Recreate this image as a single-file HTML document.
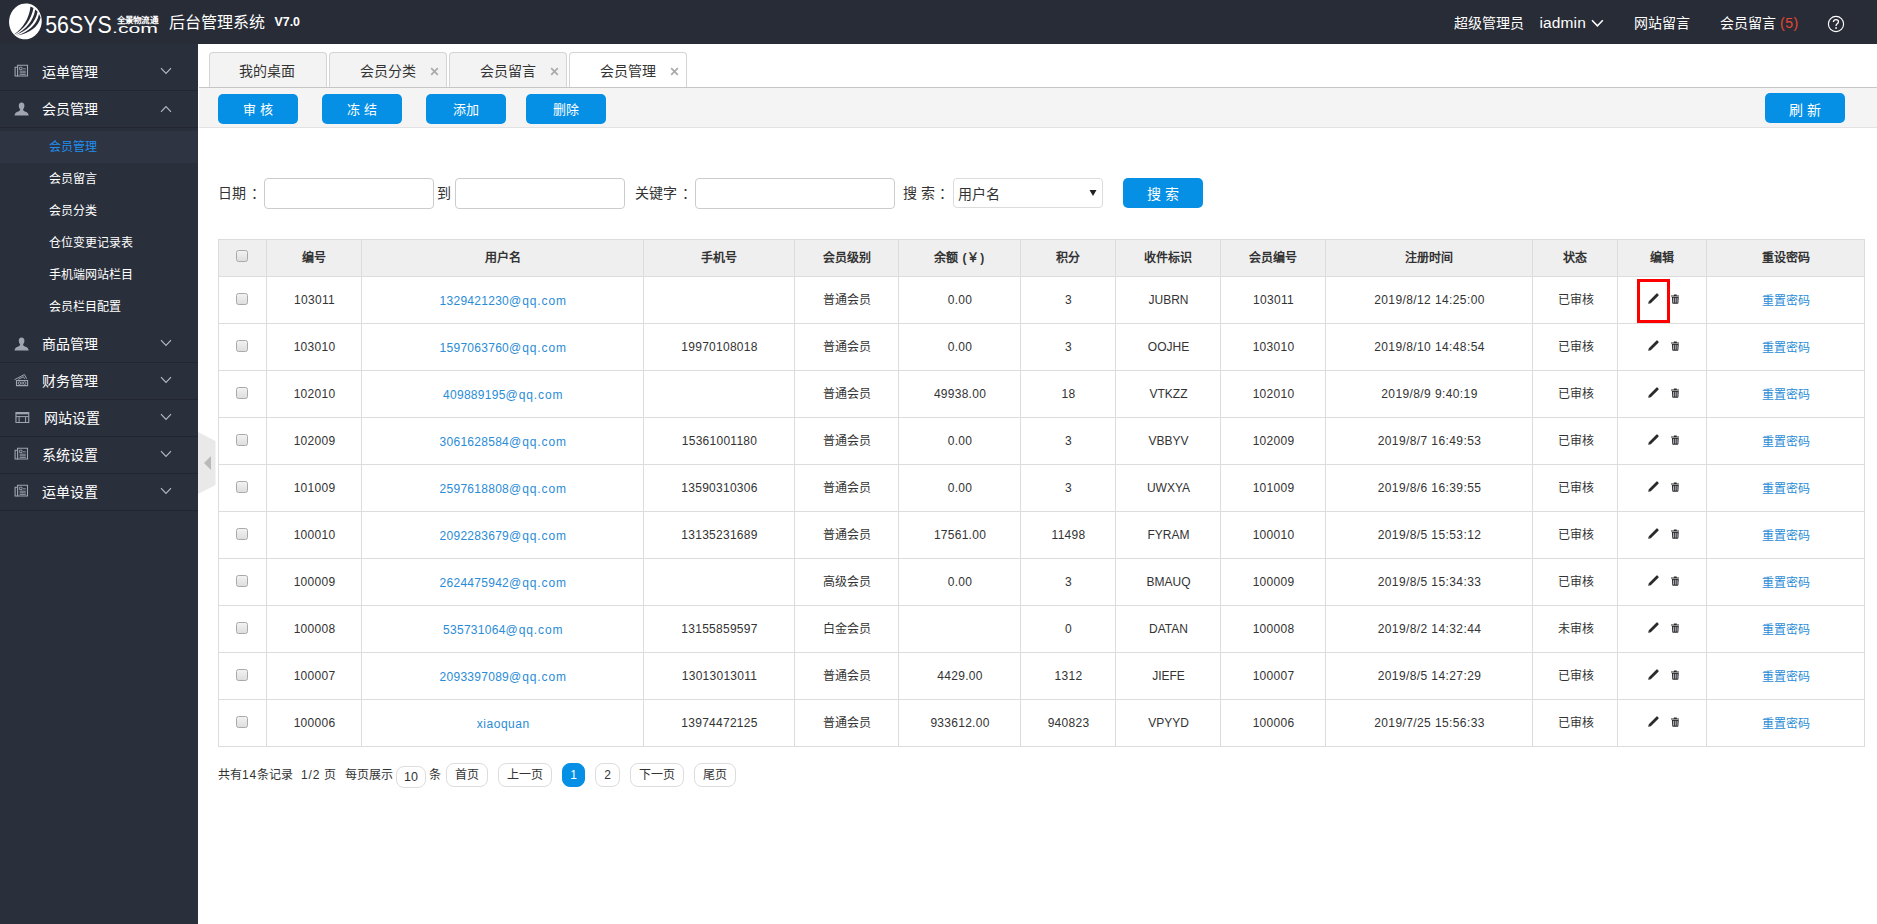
<!DOCTYPE html>
<html lang="zh-CN">
<head>
<meta charset="utf-8">
<title>后台管理系统</title>
<style>
*{box-sizing:border-box;margin:0;padding:0}
html,body{width:1877px;height:924px;overflow:hidden;background:#fff}
body{font-family:"Liberation Sans",sans-serif;font-size:12px;color:#333;position:relative}
.abs{position:absolute}
#hdr{position:absolute;left:0;top:0;width:1877px;height:44px;background:#282c36}
#side{position:absolute;left:0;top:44px;width:198px;height:880px;background:#2a2f3c}
.ht{position:absolute;color:#fff;white-space:nowrap;line-height:20px}
.mi{position:absolute;left:0;width:198px;height:37px;border-bottom:1px solid #232630}
.mi .t{position:absolute;left:42px;top:8px;font-size:14px;line-height:20px;color:#fff;white-space:nowrap}
.mi svg.i{position:absolute}
.mi svg.ch{position:absolute;left:160px;top:13px;width:12px;height:8px}
.sub{position:absolute;left:0;width:198px;height:32px}
.sub span{position:absolute;left:49px;top:6px;line-height:20px;font-size:12px;color:#fff;white-space:nowrap}
.sub.on{background:#2f3442}
.sub.on span{color:#1f8ff0}
.tab{position:absolute;top:52px;width:118px;height:36px;border:1px solid #d4d4d4;border-bottom:none;border-radius:4px 4px 0 0;background:#f3f3f3}
.tab span{position:absolute;top:8px;font-size:14px;line-height:20px;color:#333;white-space:nowrap}
.tab i{position:absolute;left:100px;top:12px;width:9px;height:9px}
.tab.on{background:#fff}
#tool{position:absolute;left:199px;top:87px;width:1678px;height:41px;background:#f4f4f4;border-top:1px solid #c6c6c6;border-bottom:1px solid #e2e2e2}
.btn{position:absolute;width:80px;height:30px;border-radius:5px;background:#0590e6;color:#fff;font-size:13px;line-height:32px;text-align:center;white-space:pre}
.lbl{position:absolute;font-size:14px;line-height:20px;color:#333;white-space:pre}
.co{margin-left:4.5px}
.inp{position:absolute;top:178px;height:31px;border:1px solid #ccc;border-radius:4px;background:#fff}
.tbl{position:absolute;left:218px;top:239px;width:1647px;height:508px}
.thbg{position:absolute;left:0;top:0;width:1647px;height:38px;background:#efefef}
.hl{position:absolute;left:0;width:1647px;height:1px;background:#dcdcdc}
.vl{position:absolute;top:0;width:1px;height:508px;background:#dcdcdc}
.th{position:absolute;top:1px;height:36px;line-height:36px;text-align:center;font-weight:bold;font-size:12px;color:#333;white-space:nowrap}
.td{position:absolute;height:46px;line-height:46px;padding-left:1px;text-align:center;font-size:12px;color:#333;white-space:nowrap}
.td.lk{color:#2a8cd6;padding-top:1px;padding-left:1.5px}
.n{letter-spacing:0.27px}
.lt{letter-spacing:0.9px}
.dt{letter-spacing:0.4px}
.cb{position:absolute;width:12px;height:12px;border:1px solid #a9a9a9;border-radius:2.5px;background:linear-gradient(#f2f2f2,#dedede)}
.ic{position:absolute}
.ic svg{display:block}
svg.pen{width:11px;height:11px}
svg.tr{width:8.6px;height:10px}
.redbox{position:absolute;left:1419px;top:40px;width:33px;height:44px;border:3px solid #f00}
.pg{position:absolute;font-size:12px;line-height:20px;color:#333;white-space:nowrap}
.pb{position:absolute;top:762.5px;height:24px;border:1px solid #ddd;border-radius:8px;font-size:12px;line-height:22px;text-align:center;color:#333;background:#fff;white-space:nowrap}
.pb.on{background:#0590e6;border-color:#0590e6;color:#fff}
</style>
</head>
<body>
<div id="hdr">
  <svg class="abs" style="left:8px;top:2px" width="36" height="40" viewBox="0 0 36 40">
    <ellipse cx="17.4" cy="19.4" rx="16.3" ry="18" fill="#fff" transform="rotate(8 17.4 19.4)"/>
    <path d="M22.5 4.5 Q20.5 22 5.5 33 Q22 24 25.5 6 Z" fill="#282c36"/>
    <path d="M27.2 7.5 Q24.5 24 7 33.2 Q26 26.5 29.6 9.8 Z" fill="#282c36"/>
    <path d="M31 12 Q28 27 9 33.6 Q29 29.5 32.6 15.5 Z" fill="#282c36"/>
  </svg>
  <svg class="abs" style="left:44px;top:10px" width="118" height="28" viewBox="0 0 118 28">
    <text x="1.2" y="22.6" font-family="Liberation Sans, sans-serif" font-size="24" fill="#fff" textLength="66.5" lengthAdjust="spacingAndGlyphs">56SYS</text>
    <text x="68" y="22.6" font-family="Liberation Sans, sans-serif" font-size="13.5" fill="#fff" textLength="46" lengthAdjust="spacingAndGlyphs">.com</text>
    <text x="72.6" y="13.2" font-family="Liberation Sans, sans-serif" font-size="8.3" font-weight="bold" fill="#fff" textLength="41.5" lengthAdjust="spacingAndGlyphs">全景物流通</text>
  </svg>
  <div class="ht" style="left:169px;top:13px;font-size:16px">后台管理系统</div>
  <div class="ht" style="left:274.5px;top:12px;font-size:12.4px;font-weight:bold">V7.0</div>
  <div class="ht" style="left:1454px;top:13px;font-size:14px">超级管理员</div>
  <div class="ht" style="left:1539.4px;top:13px;font-size:15.5px;letter-spacing:0.15px">iadmin</div>
  <svg class="abs" style="left:1591px;top:19px" width="13" height="9" viewBox="0 0 13 9"><path d="M1 1.2 L6.4 6.8 L11.8 1.2" fill="none" stroke="#fff" stroke-width="1.5"/></svg>
  <div class="ht" style="left:1634px;top:13px;font-size:14px">网站留言</div>
  <div class="ht" style="left:1720px;top:13px;font-size:14px">会员留言 <span style="color:#e74535;font-size:14px;letter-spacing:0.6px">(5)</span></div>
  <svg class="abs" style="left:1827px;top:15px" width="18" height="18" viewBox="0 0 18 18"><circle cx="9" cy="9" r="7.6" fill="none" stroke="#fff" stroke-width="1.15"/><path d="M6.4 7 Q6.5 4.6 9 4.6 Q11.5 4.6 11.5 6.8 Q11.5 8 10 8.9 Q9 9.6 9 10.9" fill="none" stroke="#fff" stroke-width="1.25"/><rect x="8.25" y="12.2" width="1.6" height="1.6" fill="#fff"/></svg>
</div>

<div id="side">
<div class="mi" style="top:10px"><svg class="i" style="left:14px;top:10.4px" width="15" height="13" viewBox="0 0 15 13"><path d="M3.6 1.2 H13.5 V12 H3.6 Z" fill="none" stroke="#a0a5b0" stroke-width="1.1"/><path d="M3.4 3.2 H1.1 V12 H4" fill="none" stroke="#a0a5b0" stroke-width="1.1"/><path d="M5.6 3.2 H8 V5.6 H5.6 Z M9 4.8 H11.8 M5.6 7.2 H11.8 M5.6 8.8 H11.8 M5.6 10.4 H11.8" fill="none" stroke="#a0a5b0" stroke-width="0.9"/></svg><span class="t" style="left:42px">运单管理</span><svg class="ch" viewBox="0 0 12 8"><path d="M1 1.2 L6 6.4 L11 1.2" fill="none" stroke="#b4b8c0" stroke-width="1.2"/></svg></div>
<div class="mi" style="top:47px"><svg class="i" style="left:13.5px;top:10.6px" width="15" height="14" viewBox="0 0 15 14"><path d="M7.6 0.6 C9.5 0.6 10.4 1.9 10.4 3.7 C10.4 5.2 9.9 6.4 9.1 7.2 C9.1 8.3 9.5 8.8 10.9 9.4 C12.9 10.2 14.4 10.9 14.7 13.4 H0.5 C0.8 10.9 2.3 10.2 4.3 9.4 C5.7 8.8 6.1 8.3 6.1 7.2 C5.3 6.4 4.8 5.2 4.8 3.7 C4.8 1.9 5.7 0.6 7.6 0.6 Z" fill="#a0a5b0"/></svg><span class="t" style="left:42px">会员管理</span><svg class="ch" style="top:14px" viewBox="0 0 12 8"><path d="M1 6.8 L6 1.6 L11 6.8" fill="none" stroke="#b4b8c0" stroke-width="1.2"/></svg></div>
<div class="sub on" style="top:87px"><span>会员管理</span></div>
<div class="sub" style="top:119px"><span>会员留言</span></div>
<div class="sub" style="top:151px"><span>会员分类</span></div>
<div class="sub" style="top:183px"><span>仓位变更记录表</span></div>
<div class="sub" style="top:215px"><span>手机端网站栏目</span></div>
<div class="sub" style="top:247px"><span>会员栏目配置</span></div>
<div class="mi" style="top:282px"><svg class="i" style="left:13.5px;top:10.6px" width="15" height="14" viewBox="0 0 15 14"><path d="M7.6 0.6 C9.5 0.6 10.4 1.9 10.4 3.7 C10.4 5.2 9.9 6.4 9.1 7.2 C9.1 8.3 9.5 8.8 10.9 9.4 C12.9 10.2 14.4 10.9 14.7 13.4 H0.5 C0.8 10.9 2.3 10.2 4.3 9.4 C5.7 8.8 6.1 8.3 6.1 7.2 C5.3 6.4 4.8 5.2 4.8 3.7 C4.8 1.9 5.7 0.6 7.6 0.6 Z" fill="#a0a5b0"/></svg><span class="t" style="left:42px">商品管理</span><svg class="ch" viewBox="0 0 12 8"><path d="M1 1.2 L6 6.4 L11 1.2" fill="none" stroke="#b4b8c0" stroke-width="1.2"/></svg></div>
<div class="mi" style="top:319px"><svg class="i" style="left:14px;top:10.9px" width="15" height="13" viewBox="0 0 15 13"><path d="M2.5 6.5 H13.6 V11.6 H2.5 Z" fill="none" stroke="#a0a5b0" stroke-width="1.1"/><circle cx="5.5" cy="9.05" r="1.35" fill="none" stroke="#a0a5b0" stroke-width="0.9"/><circle cx="10.6" cy="9.05" r="1.35" fill="none" stroke="#a0a5b0" stroke-width="0.9"/><path d="M8.05 7.4 V10.7" stroke="#a0a5b0" stroke-width="0.9"/><path d="M0.5 5.7 L10.4 0.5 L12.6 4.7 M4.4 5.3 L9.4 2.7 L10.6 4.8" fill="none" stroke="#a0a5b0" stroke-width="1"/></svg><span class="t" style="left:42px">财务管理</span><svg class="ch" viewBox="0 0 12 8"><path d="M1 1.2 L6 6.4 L11 1.2" fill="none" stroke="#b4b8c0" stroke-width="1.2"/></svg></div>
<div class="mi" style="top:356px"><svg class="i" style="left:14.5px;top:11.9px" width="15" height="12" viewBox="0 0 15 12"><path d="M0.95 0.5 H13.75 V10.45 H0.95 Z" fill="none" stroke="#a0a5b0" stroke-width="1.1"/><path d="M0.95 1.3 H13.75" stroke="#a0a5b0" stroke-width="2"/><path d="M0.95 4.6 H13.75 M4.1 4.6 V10.4 M10.6 4.6 V10.4" stroke="#a0a5b0" stroke-width="1" fill="none"/></svg><span class="t" style="left:44px">网站设置</span><svg class="ch" viewBox="0 0 12 8"><path d="M1 1.2 L6 6.4 L11 1.2" fill="none" stroke="#b4b8c0" stroke-width="1.2"/></svg></div>
<div class="mi" style="top:393px"><svg class="i" style="left:14px;top:10.4px" width="15" height="13" viewBox="0 0 15 13"><path d="M3.6 1.2 H13.5 V12 H3.6 Z" fill="none" stroke="#a0a5b0" stroke-width="1.1"/><path d="M3.4 3.2 H1.1 V12 H4" fill="none" stroke="#a0a5b0" stroke-width="1.1"/><path d="M5.6 3.2 H8 V5.6 H5.6 Z M9 4.8 H11.8 M5.6 7.2 H11.8 M5.6 8.8 H11.8 M5.6 10.4 H11.8" fill="none" stroke="#a0a5b0" stroke-width="0.9"/></svg><span class="t" style="left:42px">系统设置</span><svg class="ch" viewBox="0 0 12 8"><path d="M1 1.2 L6 6.4 L11 1.2" fill="none" stroke="#b4b8c0" stroke-width="1.2"/></svg></div>
<div class="mi" style="top:430px"><svg class="i" style="left:14px;top:10.4px" width="15" height="13" viewBox="0 0 15 13"><path d="M3.6 1.2 H13.5 V12 H3.6 Z" fill="none" stroke="#a0a5b0" stroke-width="1.1"/><path d="M3.4 3.2 H1.1 V12 H4" fill="none" stroke="#a0a5b0" stroke-width="1.1"/><path d="M5.6 3.2 H8 V5.6 H5.6 Z M9 4.8 H11.8 M5.6 7.2 H11.8 M5.6 8.8 H11.8 M5.6 10.4 H11.8" fill="none" stroke="#a0a5b0" stroke-width="0.9"/></svg><span class="t" style="left:42px">运单设置</span><svg class="ch" viewBox="0 0 12 8"><path d="M1 1.2 L6 6.4 L11 1.2" fill="none" stroke="#b4b8c0" stroke-width="1.2"/></svg></div>
</div>

<!-- collapse handle -->
<svg class="abs" style="left:198px;top:432px" width="18" height="62" viewBox="0 0 18 62"><path d="M0 0 L17.5 9 L17.5 53 L0 62 Z" fill="#e9e9e9"/><path d="M13 24 L6 31 L13 38 Z" fill="#b9b9b9"/></svg>

<!-- tabs -->
<div class="tab" style="left:209px"><span style="left:29px">我的桌面</span></div>
<div class="tab" style="left:329px"><span style="left:30px">会员分类</span><i><svg width="9" height="9" viewBox="0 0 9 9"><path d="M1.2 1.2 L7.8 7.8 M7.8 1.2 L1.2 7.8" stroke="#aaa" stroke-width="1.7"/></svg></i></div>
<div class="tab" style="left:449px"><span style="left:30px">会员留言</span><i><svg width="9" height="9" viewBox="0 0 9 9"><path d="M1.2 1.2 L7.8 7.8 M7.8 1.2 L1.2 7.8" stroke="#aaa" stroke-width="1.7"/></svg></i></div>
<div class="tab on" style="left:569px"><span style="left:30px">会员管理</span><i><svg width="9" height="9" viewBox="0 0 9 9"><path d="M1.2 1.2 L7.8 7.8 M7.8 1.2 L1.2 7.8" stroke="#aaa" stroke-width="1.7"/></svg></i></div>

<div id="tool"></div>
<div class="btn" style="left:218px;top:94px">审 核</div>
<div class="btn" style="left:322px;top:94px">冻 结</div>
<div class="btn" style="left:426px;top:94px">添加</div>
<div class="btn" style="left:526px;top:94px">删除</div>
<div class="btn" style="left:1765px;top:93px;font-size:14px;line-height:34px">刷 新</div>

<!-- search -->
<div class="lbl" style="left:218px;top:183px">日期<span class="co">：</span></div>
<div class="inp" style="left:264px;width:170px"></div>
<div class="lbl" style="left:437px;top:183px">到</div>
<div class="inp" style="left:455px;width:170px"></div>
<div class="lbl" style="left:635px;top:183px">关键字<span class="co">：</span></div>
<div class="inp" style="left:695px;width:200px"></div>
<div class="lbl" style="left:903px;top:183px">搜 索<span class="co">：</span></div>
<div class="inp" style="left:953px;width:150px;height:30px;border-color:#dcdcdc"><span class="lbl" style="left:4px;top:5px">用户名</span><svg class="abs" style="left:135px;top:10px" width="8" height="8" viewBox="0 0 8 8"><path d="M0.5 1 H7.5 L4 7 Z" fill="#222"/></svg></div>
<div class="btn" style="left:1123px;top:178px;font-size:14px;line-height:32px">搜 索</div>

<div class="tbl">
<div class="thbg"></div>
<div class="hl" style="top:0px"></div>
<div class="hl" style="top:37px"></div>
<div class="hl" style="top:84px"></div>
<div class="hl" style="top:131px"></div>
<div class="hl" style="top:178px"></div>
<div class="hl" style="top:225px"></div>
<div class="hl" style="top:272px"></div>
<div class="hl" style="top:319px"></div>
<div class="hl" style="top:366px"></div>
<div class="hl" style="top:413px"></div>
<div class="hl" style="top:460px"></div>
<div class="hl" style="top:507px"></div>
<div class="vl" style="left:0px"></div>
<div class="vl" style="left:48px"></div>
<div class="vl" style="left:143px"></div>
<div class="vl" style="left:425px"></div>
<div class="vl" style="left:576px"></div>
<div class="vl" style="left:680px"></div>
<div class="vl" style="left:802px"></div>
<div class="vl" style="left:897px"></div>
<div class="vl" style="left:1002px"></div>
<div class="vl" style="left:1107px"></div>
<div class="vl" style="left:1314px"></div>
<div class="vl" style="left:1399px"></div>
<div class="vl" style="left:1488px"></div>
<div class="vl" style="left:1646px"></div>
<div class="cb" style="left:18px;top:11px"></div>
<div class="th" style="left:49px;width:94px">编号</div>
<div class="th" style="left:144px;width:281px">用户名</div>
<div class="th" style="left:426px;width:150px">手机号</div>
<div class="th" style="left:577px;width:103px">会员级别</div>
<div class="th" style="left:681px;width:121px">余额<span style="margin-left:4.5px;letter-spacing:0.9px">(￥)</span></div>
<div class="th" style="left:803px;width:94px">积分</div>
<div class="th" style="left:898px;width:104px">收件标识</div>
<div class="th" style="left:1003px;width:104px">会员编号</div>
<div class="th" style="left:1108px;width:206px">注册时间</div>
<div class="th" style="left:1315px;width:84px">状态</div>
<div class="th" style="left:1400px;width:88px">编辑</div>
<div class="th" style="left:1489px;width:157px">重设密码</div>
<div class="cb" style="left:18px;top:54px"></div>
<div class="td" style="left:49px;width:94px;top:38px"><span class="n">103011</span></div>
<div class="td lk" style="left:144px;width:281px;top:38px"><span class="n">1329421230</span><span class="lt">@qq.com</span></div>
<div class="td" style="left:426px;width:150px;top:38px"><span class="n"></span></div>
<div class="td" style="left:577px;width:103px;top:38px">普通会员</div>
<div class="td" style="left:681px;width:121px;top:38px"><span class="n">0.00</span></div>
<div class="td" style="left:803px;width:94px;top:38px"><span class="n">3</span></div>
<div class="td" style="left:898px;width:104px;top:38px">JUBRN</div>
<div class="td" style="left:1003px;width:104px;top:38px"><span class="n">103011</span></div>
<div class="td" style="left:1108px;width:206px;top:38px"><span class="dt">2019/8/12 14:25:00</span></div>
<div class="td" style="left:1315px;width:84px;top:38px">已审核</div>
<div class="ic" style="left:1430px;top:54px"><svg class="pen" viewBox="0 0 11 11"><path d="M0.3 10.7 L0.8 8.2 L8.3 0.7 Q9 0 9.7 0.7 L10.4 1.4 Q11 2.1 10.4 2.8 L2.8 10.2 Z" fill="#2b2b2b"/><path d="M0.3 10.7 L0.7 9 L2 10.3 Z" fill="#777"/></svg></div>
<div class="ic" style="left:1452.5px;top:55px"><svg class="tr" viewBox="0 0 9 10"><path d="M0 1.3 H9 V2.5 H0 Z M3 0.2 H6 V1.3 H3 Z" fill="#2b2b2b"/><path d="M0.9 3 H8.1 L7.7 9.2 Q7.6 10 6.9 10 H2.1 Q1.4 10 1.3 9.2 Z" fill="#2b2b2b"/><path d="M2.6 3.8 V8.8 M4.5 3.8 V8.8 M6.4 3.8 V8.8" stroke="#c8c8d8" stroke-width="0.9"/></svg></div>
<div class="td lk" style="left:1489px;width:157px;top:38px">重置密码</div>
<div class="cb" style="left:18px;top:101px"></div>
<div class="td" style="left:49px;width:94px;top:85px"><span class="n">103010</span></div>
<div class="td lk" style="left:144px;width:281px;top:85px"><span class="n">1597063760</span><span class="lt">@qq.com</span></div>
<div class="td" style="left:426px;width:150px;top:85px"><span class="n">19970108018</span></div>
<div class="td" style="left:577px;width:103px;top:85px">普通会员</div>
<div class="td" style="left:681px;width:121px;top:85px"><span class="n">0.00</span></div>
<div class="td" style="left:803px;width:94px;top:85px"><span class="n">3</span></div>
<div class="td" style="left:898px;width:104px;top:85px">OOJHE</div>
<div class="td" style="left:1003px;width:104px;top:85px"><span class="n">103010</span></div>
<div class="td" style="left:1108px;width:206px;top:85px"><span class="dt">2019/8/10 14:48:54</span></div>
<div class="td" style="left:1315px;width:84px;top:85px">已审核</div>
<div class="ic" style="left:1430px;top:101px"><svg class="pen" viewBox="0 0 11 11"><path d="M0.3 10.7 L0.8 8.2 L8.3 0.7 Q9 0 9.7 0.7 L10.4 1.4 Q11 2.1 10.4 2.8 L2.8 10.2 Z" fill="#2b2b2b"/><path d="M0.3 10.7 L0.7 9 L2 10.3 Z" fill="#777"/></svg></div>
<div class="ic" style="left:1452.5px;top:102px"><svg class="tr" viewBox="0 0 9 10"><path d="M0 1.3 H9 V2.5 H0 Z M3 0.2 H6 V1.3 H3 Z" fill="#2b2b2b"/><path d="M0.9 3 H8.1 L7.7 9.2 Q7.6 10 6.9 10 H2.1 Q1.4 10 1.3 9.2 Z" fill="#2b2b2b"/><path d="M2.6 3.8 V8.8 M4.5 3.8 V8.8 M6.4 3.8 V8.8" stroke="#c8c8d8" stroke-width="0.9"/></svg></div>
<div class="td lk" style="left:1489px;width:157px;top:85px">重置密码</div>
<div class="cb" style="left:18px;top:148px"></div>
<div class="td" style="left:49px;width:94px;top:132px"><span class="n">102010</span></div>
<div class="td lk" style="left:144px;width:281px;top:132px"><span class="n">409889195</span><span class="lt">@qq.com</span></div>
<div class="td" style="left:426px;width:150px;top:132px"><span class="n"></span></div>
<div class="td" style="left:577px;width:103px;top:132px">普通会员</div>
<div class="td" style="left:681px;width:121px;top:132px"><span class="n">49938.00</span></div>
<div class="td" style="left:803px;width:94px;top:132px"><span class="n">18</span></div>
<div class="td" style="left:898px;width:104px;top:132px">VTKZZ</div>
<div class="td" style="left:1003px;width:104px;top:132px"><span class="n">102010</span></div>
<div class="td" style="left:1108px;width:206px;top:132px"><span class="dt">2019/8/9 9:40:19</span></div>
<div class="td" style="left:1315px;width:84px;top:132px">已审核</div>
<div class="ic" style="left:1430px;top:148px"><svg class="pen" viewBox="0 0 11 11"><path d="M0.3 10.7 L0.8 8.2 L8.3 0.7 Q9 0 9.7 0.7 L10.4 1.4 Q11 2.1 10.4 2.8 L2.8 10.2 Z" fill="#2b2b2b"/><path d="M0.3 10.7 L0.7 9 L2 10.3 Z" fill="#777"/></svg></div>
<div class="ic" style="left:1452.5px;top:149px"><svg class="tr" viewBox="0 0 9 10"><path d="M0 1.3 H9 V2.5 H0 Z M3 0.2 H6 V1.3 H3 Z" fill="#2b2b2b"/><path d="M0.9 3 H8.1 L7.7 9.2 Q7.6 10 6.9 10 H2.1 Q1.4 10 1.3 9.2 Z" fill="#2b2b2b"/><path d="M2.6 3.8 V8.8 M4.5 3.8 V8.8 M6.4 3.8 V8.8" stroke="#c8c8d8" stroke-width="0.9"/></svg></div>
<div class="td lk" style="left:1489px;width:157px;top:132px">重置密码</div>
<div class="cb" style="left:18px;top:195px"></div>
<div class="td" style="left:49px;width:94px;top:179px"><span class="n">102009</span></div>
<div class="td lk" style="left:144px;width:281px;top:179px"><span class="n">3061628584</span><span class="lt">@qq.com</span></div>
<div class="td" style="left:426px;width:150px;top:179px"><span class="n">15361001180</span></div>
<div class="td" style="left:577px;width:103px;top:179px">普通会员</div>
<div class="td" style="left:681px;width:121px;top:179px"><span class="n">0.00</span></div>
<div class="td" style="left:803px;width:94px;top:179px"><span class="n">3</span></div>
<div class="td" style="left:898px;width:104px;top:179px">VBBYV</div>
<div class="td" style="left:1003px;width:104px;top:179px"><span class="n">102009</span></div>
<div class="td" style="left:1108px;width:206px;top:179px"><span class="dt">2019/8/7 16:49:53</span></div>
<div class="td" style="left:1315px;width:84px;top:179px">已审核</div>
<div class="ic" style="left:1430px;top:195px"><svg class="pen" viewBox="0 0 11 11"><path d="M0.3 10.7 L0.8 8.2 L8.3 0.7 Q9 0 9.7 0.7 L10.4 1.4 Q11 2.1 10.4 2.8 L2.8 10.2 Z" fill="#2b2b2b"/><path d="M0.3 10.7 L0.7 9 L2 10.3 Z" fill="#777"/></svg></div>
<div class="ic" style="left:1452.5px;top:196px"><svg class="tr" viewBox="0 0 9 10"><path d="M0 1.3 H9 V2.5 H0 Z M3 0.2 H6 V1.3 H3 Z" fill="#2b2b2b"/><path d="M0.9 3 H8.1 L7.7 9.2 Q7.6 10 6.9 10 H2.1 Q1.4 10 1.3 9.2 Z" fill="#2b2b2b"/><path d="M2.6 3.8 V8.8 M4.5 3.8 V8.8 M6.4 3.8 V8.8" stroke="#c8c8d8" stroke-width="0.9"/></svg></div>
<div class="td lk" style="left:1489px;width:157px;top:179px">重置密码</div>
<div class="cb" style="left:18px;top:242px"></div>
<div class="td" style="left:49px;width:94px;top:226px"><span class="n">101009</span></div>
<div class="td lk" style="left:144px;width:281px;top:226px"><span class="n">2597618808</span><span class="lt">@qq.com</span></div>
<div class="td" style="left:426px;width:150px;top:226px"><span class="n">13590310306</span></div>
<div class="td" style="left:577px;width:103px;top:226px">普通会员</div>
<div class="td" style="left:681px;width:121px;top:226px"><span class="n">0.00</span></div>
<div class="td" style="left:803px;width:94px;top:226px"><span class="n">3</span></div>
<div class="td" style="left:898px;width:104px;top:226px">UWXYA</div>
<div class="td" style="left:1003px;width:104px;top:226px"><span class="n">101009</span></div>
<div class="td" style="left:1108px;width:206px;top:226px"><span class="dt">2019/8/6 16:39:55</span></div>
<div class="td" style="left:1315px;width:84px;top:226px">已审核</div>
<div class="ic" style="left:1430px;top:242px"><svg class="pen" viewBox="0 0 11 11"><path d="M0.3 10.7 L0.8 8.2 L8.3 0.7 Q9 0 9.7 0.7 L10.4 1.4 Q11 2.1 10.4 2.8 L2.8 10.2 Z" fill="#2b2b2b"/><path d="M0.3 10.7 L0.7 9 L2 10.3 Z" fill="#777"/></svg></div>
<div class="ic" style="left:1452.5px;top:243px"><svg class="tr" viewBox="0 0 9 10"><path d="M0 1.3 H9 V2.5 H0 Z M3 0.2 H6 V1.3 H3 Z" fill="#2b2b2b"/><path d="M0.9 3 H8.1 L7.7 9.2 Q7.6 10 6.9 10 H2.1 Q1.4 10 1.3 9.2 Z" fill="#2b2b2b"/><path d="M2.6 3.8 V8.8 M4.5 3.8 V8.8 M6.4 3.8 V8.8" stroke="#c8c8d8" stroke-width="0.9"/></svg></div>
<div class="td lk" style="left:1489px;width:157px;top:226px">重置密码</div>
<div class="cb" style="left:18px;top:289px"></div>
<div class="td" style="left:49px;width:94px;top:273px"><span class="n">100010</span></div>
<div class="td lk" style="left:144px;width:281px;top:273px"><span class="n">2092283679</span><span class="lt">@qq.com</span></div>
<div class="td" style="left:426px;width:150px;top:273px"><span class="n">13135231689</span></div>
<div class="td" style="left:577px;width:103px;top:273px">普通会员</div>
<div class="td" style="left:681px;width:121px;top:273px"><span class="n">17561.00</span></div>
<div class="td" style="left:803px;width:94px;top:273px"><span class="n">11498</span></div>
<div class="td" style="left:898px;width:104px;top:273px">FYRAM</div>
<div class="td" style="left:1003px;width:104px;top:273px"><span class="n">100010</span></div>
<div class="td" style="left:1108px;width:206px;top:273px"><span class="dt">2019/8/5 15:53:12</span></div>
<div class="td" style="left:1315px;width:84px;top:273px">已审核</div>
<div class="ic" style="left:1430px;top:289px"><svg class="pen" viewBox="0 0 11 11"><path d="M0.3 10.7 L0.8 8.2 L8.3 0.7 Q9 0 9.7 0.7 L10.4 1.4 Q11 2.1 10.4 2.8 L2.8 10.2 Z" fill="#2b2b2b"/><path d="M0.3 10.7 L0.7 9 L2 10.3 Z" fill="#777"/></svg></div>
<div class="ic" style="left:1452.5px;top:290px"><svg class="tr" viewBox="0 0 9 10"><path d="M0 1.3 H9 V2.5 H0 Z M3 0.2 H6 V1.3 H3 Z" fill="#2b2b2b"/><path d="M0.9 3 H8.1 L7.7 9.2 Q7.6 10 6.9 10 H2.1 Q1.4 10 1.3 9.2 Z" fill="#2b2b2b"/><path d="M2.6 3.8 V8.8 M4.5 3.8 V8.8 M6.4 3.8 V8.8" stroke="#c8c8d8" stroke-width="0.9"/></svg></div>
<div class="td lk" style="left:1489px;width:157px;top:273px">重置密码</div>
<div class="cb" style="left:18px;top:336px"></div>
<div class="td" style="left:49px;width:94px;top:320px"><span class="n">100009</span></div>
<div class="td lk" style="left:144px;width:281px;top:320px"><span class="n">2624475942</span><span class="lt">@qq.com</span></div>
<div class="td" style="left:426px;width:150px;top:320px"><span class="n"></span></div>
<div class="td" style="left:577px;width:103px;top:320px">高级会员</div>
<div class="td" style="left:681px;width:121px;top:320px"><span class="n">0.00</span></div>
<div class="td" style="left:803px;width:94px;top:320px"><span class="n">3</span></div>
<div class="td" style="left:898px;width:104px;top:320px">BMAUQ</div>
<div class="td" style="left:1003px;width:104px;top:320px"><span class="n">100009</span></div>
<div class="td" style="left:1108px;width:206px;top:320px"><span class="dt">2019/8/5 15:34:33</span></div>
<div class="td" style="left:1315px;width:84px;top:320px">已审核</div>
<div class="ic" style="left:1430px;top:336px"><svg class="pen" viewBox="0 0 11 11"><path d="M0.3 10.7 L0.8 8.2 L8.3 0.7 Q9 0 9.7 0.7 L10.4 1.4 Q11 2.1 10.4 2.8 L2.8 10.2 Z" fill="#2b2b2b"/><path d="M0.3 10.7 L0.7 9 L2 10.3 Z" fill="#777"/></svg></div>
<div class="ic" style="left:1452.5px;top:337px"><svg class="tr" viewBox="0 0 9 10"><path d="M0 1.3 H9 V2.5 H0 Z M3 0.2 H6 V1.3 H3 Z" fill="#2b2b2b"/><path d="M0.9 3 H8.1 L7.7 9.2 Q7.6 10 6.9 10 H2.1 Q1.4 10 1.3 9.2 Z" fill="#2b2b2b"/><path d="M2.6 3.8 V8.8 M4.5 3.8 V8.8 M6.4 3.8 V8.8" stroke="#c8c8d8" stroke-width="0.9"/></svg></div>
<div class="td lk" style="left:1489px;width:157px;top:320px">重置密码</div>
<div class="cb" style="left:18px;top:383px"></div>
<div class="td" style="left:49px;width:94px;top:367px"><span class="n">100008</span></div>
<div class="td lk" style="left:144px;width:281px;top:367px"><span class="n">535731064</span><span class="lt">@qq.com</span></div>
<div class="td" style="left:426px;width:150px;top:367px"><span class="n">13155859597</span></div>
<div class="td" style="left:577px;width:103px;top:367px">白金会员</div>
<div class="td" style="left:681px;width:121px;top:367px"><span class="n"></span></div>
<div class="td" style="left:803px;width:94px;top:367px"><span class="n">0</span></div>
<div class="td" style="left:898px;width:104px;top:367px">DATAN</div>
<div class="td" style="left:1003px;width:104px;top:367px"><span class="n">100008</span></div>
<div class="td" style="left:1108px;width:206px;top:367px"><span class="dt">2019/8/2 14:32:44</span></div>
<div class="td" style="left:1315px;width:84px;top:367px">未审核</div>
<div class="ic" style="left:1430px;top:383px"><svg class="pen" viewBox="0 0 11 11"><path d="M0.3 10.7 L0.8 8.2 L8.3 0.7 Q9 0 9.7 0.7 L10.4 1.4 Q11 2.1 10.4 2.8 L2.8 10.2 Z" fill="#2b2b2b"/><path d="M0.3 10.7 L0.7 9 L2 10.3 Z" fill="#777"/></svg></div>
<div class="ic" style="left:1452.5px;top:384px"><svg class="tr" viewBox="0 0 9 10"><path d="M0 1.3 H9 V2.5 H0 Z M3 0.2 H6 V1.3 H3 Z" fill="#2b2b2b"/><path d="M0.9 3 H8.1 L7.7 9.2 Q7.6 10 6.9 10 H2.1 Q1.4 10 1.3 9.2 Z" fill="#2b2b2b"/><path d="M2.6 3.8 V8.8 M4.5 3.8 V8.8 M6.4 3.8 V8.8" stroke="#c8c8d8" stroke-width="0.9"/></svg></div>
<div class="td lk" style="left:1489px;width:157px;top:367px">重置密码</div>
<div class="cb" style="left:18px;top:430px"></div>
<div class="td" style="left:49px;width:94px;top:414px"><span class="n">100007</span></div>
<div class="td lk" style="left:144px;width:281px;top:414px"><span class="n">2093397089</span><span class="lt">@qq.com</span></div>
<div class="td" style="left:426px;width:150px;top:414px"><span class="n">13013013011</span></div>
<div class="td" style="left:577px;width:103px;top:414px">普通会员</div>
<div class="td" style="left:681px;width:121px;top:414px"><span class="n">4429.00</span></div>
<div class="td" style="left:803px;width:94px;top:414px"><span class="n">1312</span></div>
<div class="td" style="left:898px;width:104px;top:414px">JIEFE</div>
<div class="td" style="left:1003px;width:104px;top:414px"><span class="n">100007</span></div>
<div class="td" style="left:1108px;width:206px;top:414px"><span class="dt">2019/8/5 14:27:29</span></div>
<div class="td" style="left:1315px;width:84px;top:414px">已审核</div>
<div class="ic" style="left:1430px;top:430px"><svg class="pen" viewBox="0 0 11 11"><path d="M0.3 10.7 L0.8 8.2 L8.3 0.7 Q9 0 9.7 0.7 L10.4 1.4 Q11 2.1 10.4 2.8 L2.8 10.2 Z" fill="#2b2b2b"/><path d="M0.3 10.7 L0.7 9 L2 10.3 Z" fill="#777"/></svg></div>
<div class="ic" style="left:1452.5px;top:431px"><svg class="tr" viewBox="0 0 9 10"><path d="M0 1.3 H9 V2.5 H0 Z M3 0.2 H6 V1.3 H3 Z" fill="#2b2b2b"/><path d="M0.9 3 H8.1 L7.7 9.2 Q7.6 10 6.9 10 H2.1 Q1.4 10 1.3 9.2 Z" fill="#2b2b2b"/><path d="M2.6 3.8 V8.8 M4.5 3.8 V8.8 M6.4 3.8 V8.8" stroke="#c8c8d8" stroke-width="0.9"/></svg></div>
<div class="td lk" style="left:1489px;width:157px;top:414px">重置密码</div>
<div class="cb" style="left:18px;top:477px"></div>
<div class="td" style="left:49px;width:94px;top:461px"><span class="n">100006</span></div>
<div class="td lk" style="left:144px;width:281px;top:461px"><span style="letter-spacing:0.55px">xiaoquan</span></div>
<div class="td" style="left:426px;width:150px;top:461px"><span class="n">13974472125</span></div>
<div class="td" style="left:577px;width:103px;top:461px">普通会员</div>
<div class="td" style="left:681px;width:121px;top:461px"><span class="n">933612.00</span></div>
<div class="td" style="left:803px;width:94px;top:461px"><span class="n">940823</span></div>
<div class="td" style="left:898px;width:104px;top:461px">VPYYD</div>
<div class="td" style="left:1003px;width:104px;top:461px"><span class="n">100006</span></div>
<div class="td" style="left:1108px;width:206px;top:461px"><span class="dt">2019/7/25 15:56:33</span></div>
<div class="td" style="left:1315px;width:84px;top:461px">已审核</div>
<div class="ic" style="left:1430px;top:477px"><svg class="pen" viewBox="0 0 11 11"><path d="M0.3 10.7 L0.8 8.2 L8.3 0.7 Q9 0 9.7 0.7 L10.4 1.4 Q11 2.1 10.4 2.8 L2.8 10.2 Z" fill="#2b2b2b"/><path d="M0.3 10.7 L0.7 9 L2 10.3 Z" fill="#777"/></svg></div>
<div class="ic" style="left:1452.5px;top:478px"><svg class="tr" viewBox="0 0 9 10"><path d="M0 1.3 H9 V2.5 H0 Z M3 0.2 H6 V1.3 H3 Z" fill="#2b2b2b"/><path d="M0.9 3 H8.1 L7.7 9.2 Q7.6 10 6.9 10 H2.1 Q1.4 10 1.3 9.2 Z" fill="#2b2b2b"/><path d="M2.6 3.8 V8.8 M4.5 3.8 V8.8 M6.4 3.8 V8.8" stroke="#c8c8d8" stroke-width="0.9"/></svg></div>
<div class="td lk" style="left:1489px;width:157px;top:461px">重置密码</div>
<div class="redbox"></div>
</div>

<!-- pagination -->
<div class="pg" style="left:218px;top:764.5px">共有<span class="lt">14</span>条记录</div>
<div class="pg" style="left:301px;top:764.5px"><span class="lt">1/2</span><span style="margin-left:3.5px">页</span></div>
<div class="pg" style="left:345px;top:764.5px">每页展示</div>
<div class="pb" style="left:396px;top:765.5px;width:30px;height:22px;line-height:21px;font-size:12.5px">10</div>
<div class="pg" style="left:429px;top:764.5px">条</div>
<div class="pb" style="left:446px;width:42px">首页</div>
<div class="pb" style="left:498px;width:54px">上一页</div>
<div class="pb on" style="left:562px;width:23px">1</div>
<div class="pb" style="left:595px;width:25px">2</div>
<div class="pb" style="left:630px;width:54px">下一页</div>
<div class="pb" style="left:694px;width:42px">尾页</div>
</body>
</html>
